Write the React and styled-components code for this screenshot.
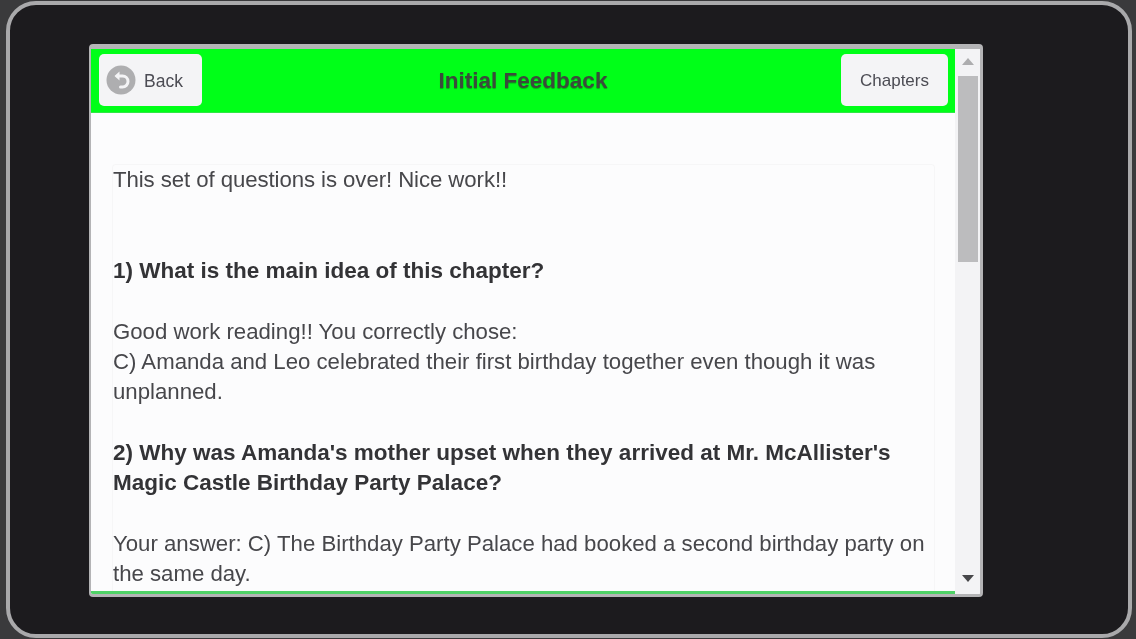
import React from "react";
import styled, { createGlobalStyle } from "styled-components";

const Global = createGlobalStyle`
  html, body { margin: 0; padding: 0; background: #3a3a3c; overflow: hidden; }
  #root { width: 1136px; height: 639px; }
`;

const Screen = styled.div`
  box-sizing: border-box;
  width: 1126px;
  height: 637px;
  margin: 1px 0 0 6px;
  background: #1c1b1e;
  border: 4px solid #a9a9ab;
  border-radius: 30px;
  padding: 39px 0 0 79px;
  filter: blur(0.45px);
`;

const Panel = styled.div`
  box-sizing: border-box;
  width: 894px;
  height: 553px;
  display: flex;
  background: #f2f2f4;
  border: solid #b4b4b6;
  border-width: 5px 3px 3px 2px;
  border-radius: 4px;
  overflow: hidden;
  font-family: "Liberation Sans", Arial, sans-serif;
`;

const Main = styled.div`
  width: 864px;
  flex: none;
  display: flex;
  flex-direction: column;
  background: #fcfcfd;
  border-bottom: 3px solid #4fd267;
`;

const Header = styled.header`
  height: 64px;
  flex: none;
  background: #00ff18;
  border-bottom: 1px solid #2fe845;
  display: flex;
  align-items: center;
  justify-content: space-between;
  box-sizing: border-box;
  padding: 0 7px 1px 8px;
`;

const Title = styled.h1`
  margin: 2px 0 0 3px;
  font-size: 22.5px;
  font-weight: bold;
  color: #3b4a3c;
  text-shadow: 0 1px 1px rgba(0, 0, 0, 0.3);
`;

const HeaderButton = styled.div`
  box-sizing: border-box;
  height: 52px;
  width: ${(p) => p.$w}px;
  background: #f4f4f6;
  border-radius: 5px;
  display: flex;
  align-items: center;
  justify-content: ${(p) => p.$justify || "center"};
  gap: 8px;
  padding: ${(p) => p.$pad || "2px 0 0"};
  font-size: ${(p) => p.$size || 17.5}px;
  color: #4c4c54;
`;

const BackLabel = styled.span`
  margin-top: 2px;
`;

const BackIcon = styled.svg`
  width: 30px;
  height: 32px;
  flex: none;
`;

const Content = styled.div`
  flex: 1;
  min-height: 0;
  overflow: hidden;
  padding: 51px 20px 0 21px;
`;

const Card = styled.div`
  box-sizing: border-box;
  height: 460px;
  border: solid #f6f6f7;
  border-width: 1px 1px 0 1px;
  border-radius: 4px 4px 0 0;
  font-size: 22.2px;
  line-height: 30.35px;
  color: #47474b;
`;

const Para = styled.p`
  margin: 0 0 ${(p) => p.$gap || 30.35}px;
  letter-spacing: ${(p) => p.$track || 0}px;
`;

const Question = styled(Para)`
  font-size: 22.5px;
  font-weight: bold;
  color: #333336;
`;

const ScrollTrack = styled.div`
  flex: 1;
  display: flex;
  flex-direction: column;
  align-items: center;
  padding: 9px 0 12px 0;
  background: #f3f3f5;
`;

const Arrow = styled.div`
  width: 0;
  height: 0;
  border-left: 6px solid transparent;
  border-right: 6px solid transparent;
  ${(p) =>
    p.$up
      ? "border-bottom: 7px solid #adadaf; margin-bottom: 11px;"
      : "border-top: 7px solid #47474a; margin-top: auto;"}
`;

const Thumb = styled.div`
  width: 20px;
  height: 186px;
  background: #bcbcbe;
`;

export default function App() {
  return (
    <>
      <Global />
      <Screen>
        <Panel>
          <Main>
            <Header>
              <HeaderButton $w={103} $justify="flex-start" $pad="0 0 0 7px">
                <BackIcon viewBox="0 0 30 32">
                  <circle cx="15" cy="16" r="14.5" fill="#aeaeb0" />
                  <path
                    d="M11 12h5.5a5.5 5.5 0 0 1 0 11h-2"
                    fill="none"
                    stroke="#f4f4f6"
                    strokeWidth="3"
                    strokeLinecap="round"
                  />
                  <path d="M13.5 7.5 L8.5 12 L13.5 16.5 Z" fill="#f4f4f6" />
                </BackIcon>
                <BackLabel>Back</BackLabel>
              </HeaderButton>
              <Title>Initial Feedback</Title>
              <HeaderButton $w={107} $size={17}>Chapters</HeaderButton>
            </Header>
            <Content>
              <Card>
                <Para $gap={60.7} $track={-0.07}>This set of questions is over! Nice work!!</Para>
                <Question>1) What is the main idea of this chapter?</Question>
                <Para>
                  Good work reading!! You correctly chose:
                  <br />
                  C) Amanda and Leo celebrated their first birthday together even though it was
                  <br />
                  unplanned.
                </Para>
                <Question>
                  2) Why was Amanda's mother upset when they arrived at Mr. McAllister's
                  <br />
                  Magic Castle Birthday Party Palace?
                </Question>
                <Para>
                  Your answer: C) The Birthday Party Palace had booked a second birthday party on
                  <br />
                  the same day.
                </Para>
              </Card>
            </Content>
          </Main>
          <ScrollTrack>
            <Arrow $up />
            <Thumb />
            <Arrow />
          </ScrollTrack>
        </Panel>
      </Screen>
    </>
  );
}
